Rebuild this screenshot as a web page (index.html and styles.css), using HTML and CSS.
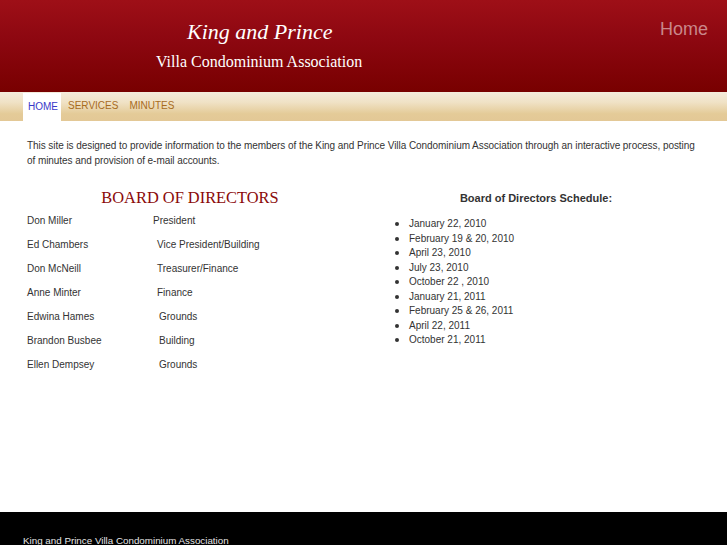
FILE: index.html
```html
<!DOCTYPE html>
<html>
<head>
<meta charset="utf-8">
<title>King and Prince Villa Condominium Association</title>
<link rel="stylesheet" href="styles.css">
</head>
<body>
<header class="masthead">
  <div class="brand">
    <div class="brand-title">King and Prince</div>
    <div class="brand-sub">Villa Condominium Association</div>
  </div>
  <div class="page-name">Home</div>
</header>
<nav class="navbar">
  <a class="nav-item active" href="#">HOME</a>
  <a class="nav-item" href="#">SERVICES</a>
  <a class="nav-item" href="#">MINUTES</a>
</nav>
<main class="content">
  <p class="intro">This site is designed to provide information to the members of the King and Prince Villa Condominium Association through an interactive process, posting of minutes and provision of e-mail accounts.</p>
  <div class="columns">
    <section class="col-left">
      <h2 class="board-title">BOARD OF DIRECTORS</h2>
      <div class="directors">
        <div class="row"><span class="name">Don Miller</span><span class="role">President</span></div>
        <div class="row"><span class="name">Ed Chambers</span><span class="role ind1">Vice President/Building</span></div>
        <div class="row"><span class="name">Don McNeill</span><span class="role ind1">Treasurer/Finance</span></div>
        <div class="row"><span class="name">Anne Minter</span><span class="role ind1">Finance</span></div>
        <div class="row"><span class="name">Edwina Hames</span><span class="role ind2">Grounds</span></div>
        <div class="row"><span class="name">Brandon Busbee</span><span class="role ind2">Building</span></div>
        <div class="row"><span class="name">Ellen Dempsey</span><span class="role ind2">Grounds</span></div>
      </div>
    </section>
    <section class="col-right">
      <h3 class="sched-title">Board of Directors Schedule:</h3>
      <ul class="sched">
        <li>January 22, 2010</li>
        <li>February 19 &amp; 20, 2010</li>
        <li>April 23, 2010</li>
        <li>July 23, 2010</li>
        <li>October 22 , 2010</li>
        <li>January 21, 2011</li>
        <li>February 25 &amp; 26, 2011</li>
        <li>April 22, 2011</li>
        <li>October 21, 2011</li>
      </ul>
    </section>
  </div>
</main>
<footer class="footer">King and Prince Villa Condominium Association</footer>
</body>
</html>
```
FILE: styles.css
```css
* { box-sizing: border-box; }
html, body { margin: 0; padding: 0; }
body {
  background: #fff;
  font-family: "Liberation Sans", Arial, sans-serif;
  color: #333;
  width: 727px;
  height: 545px;
  overflow: hidden;
  display: flex;
  flex-direction: column;
}
.masthead {
  height: 92px;
  background: linear-gradient(#9e0f17 0%, #8c0710 45%, #780000 100%);
  display: flex;
  justify-content: space-between;
  align-items: flex-start;
  flex-shrink: 0;
}
.brand {
  padding-left: 156px;
  padding-top: 19px;
  font-family: "Liberation Serif", "Times New Roman", serif;
  color: #fff;
}
.brand-title {
  font-style: italic;
  font-size: 22px;
  line-height: 26px;
  padding-left: 31px;
}
.brand-sub {
  font-size: 16px;
  line-height: 18px;
  margin-top: 8px;
}
.page-name {
  font-size: 18px;
  color: #c9878a;
  padding-top: 19px;
  padding-right: 19px;
}
.navbar {
  height: 29px;
  background: linear-gradient(#f4ebdc 0%, #f0e2c6 35%, #e4cb98 75%, #e3c896 100%);
  display: flex;
  align-items: stretch;
  padding-left: 23px;
  flex-shrink: 0;
}
.nav-item {
  font-size: 10px;
  text-decoration: none;
  color: #a86c1e;
  display: flex;
  align-items: center;
  padding: 0 4px 3px 7px;
}
.nav-item.active {
  background: #fff;
  color: #3838c8;
  margin-top: 1px;
  padding: 0 3px 2px 5px;
}
.content {
  flex: 1;
  padding: 17px 27px 0 27px;
}
.intro {
  margin: 0;
  font-size: 10px;
  line-height: 15px;
  letter-spacing: -0.06px;
  width: 673px;
}
.columns {
  display: grid;
  grid-template-columns: 326px 1fr;
  margin-top: 20px;
}
.board-title {
  font-family: "Liberation Serif", "Times New Roman", serif;
  font-weight: normal;
  color: #8b0a0a;
  font-size: 16.4px;
  line-height: 20px;
  margin: 0 0 7px 0;
  text-align: center;
}
.directors { font-size: 10px; }
.row {
  display: flex;
  height: 24px;
  line-height: 12px;
}
.name { width: 126px; }
.role.ind1 { padding-left: 4px; }
.role.ind2 { padding-left: 6px; }
.col-right { padding-left: 19px; }
.sched-title {
  font-size: 11px;
  font-weight: bold;
  text-align: center;
  margin: 0;
  line-height: 20px;
}
.sched {
  margin: 8px 0 0 0;
  padding-left: 37px;
  font-size: 10px;
  line-height: 14.5px;
}
.sched li {
  height: 14.5px;
}
.sched li::marker { font-size: 12px; }
.footer {
  height: 33px;
  background: #000;
  color: #e6e6e6;
  font-size: 9.8px;
  padding: 23px 0 0 23px;
  flex-shrink: 0;
}
```
